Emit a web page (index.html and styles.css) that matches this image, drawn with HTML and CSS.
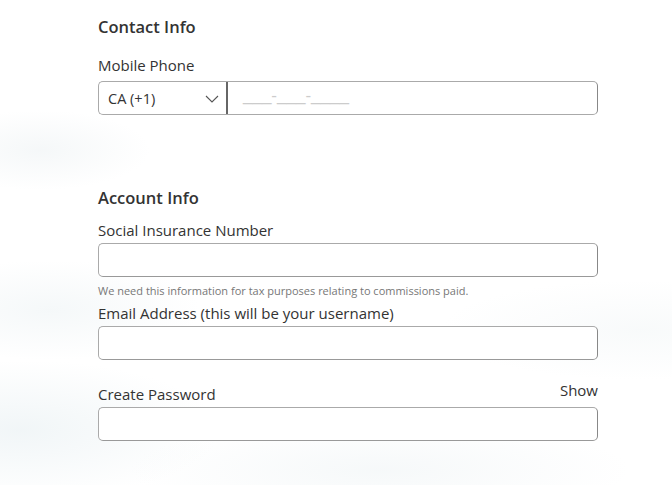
FILE: index.html
```html
<!DOCTYPE html>
<html lang="en">
<head>
    <meta charset="UTF-8">
    <title>Sign Up</title>
    <link rel="stylesheet" href="styles.css">
</head>
<body>
    <div class="form-wrap">
        <section class="section contact">
            <h3>Contact Info</h3>
            <label class="field-label">Mobile Phone</label>
            <div class="phone-row">
                <div class="country">
                    <span>CA (+1)</span>
                    <svg class="chevron" width="14" height="8" viewBox="0 0 14 8"><path d="M1 1 L7 7 L13 1" fill="none" stroke="#555" stroke-width="1.1"/></svg>
                </div>
                <div class="phone-input"><span class="mask">___-___-____</span></div>
            </div>
        </section>

        <section class="section account">
            <h3>Account Info</h3>
            <label class="field-label">Social Insurance Number</label>
            <div class="text-input"></div>
            <p class="hint">We need this information for tax purposes relating to commissions paid.</p>

            <label class="field-label">Email Address (this will be your username)</label>
            <div class="text-input"></div>

            <div class="label-row">
                <label class="field-label">Create Password</label>
                <span class="show">Show</span>
            </div>
            <div class="text-input"></div>
        </section>
    </div>
</body>
</html>
```

FILE: styles.css
```css
body {
    margin: 0;
    height: 485px;
    overflow: hidden;
    font-family: 'Open Sans', 'Liberation Sans', sans-serif;
    color: #333;
    background:
        radial-gradient(ellipse 110px 40px at 40px 150px, rgba(215, 226, 230, 0.25), transparent),
        radial-gradient(ellipse 150px 50px at 50px 310px, rgba(215, 228, 232, 0.25), transparent),
        radial-gradient(ellipse 200px 70px at 20px 430px, rgba(220, 232, 236, 0.4), transparent),
        radial-gradient(ellipse 250px 50px at 380px 470px, rgba(225, 234, 237, 0.3), transparent),
        radial-gradient(ellipse 200px 50px at 640px 330px, rgba(228, 236, 238, 0.25), transparent),
        #fff;
}

.form-wrap {
    width: 500px;
    margin-left: 98px;
}

h3 {
    font-size: 16.5px;
    line-height: 20px;
    font-weight: 600;
    margin: 0;
    color: #333;
}

.contact {
    padding-top: 17px;
}

.contact h3 {
    margin-bottom: 19px;
}

.account {
    padding-top: 73px;
}

.account h3 {
    margin-bottom: 13px;
}

.field-label {
    display: block;
    font-size: 15px;
    line-height: 18px;
    margin-bottom: 4px;
}

.contact .field-label {
    margin-bottom: 7px;
}

.phone-row {
    display: flex;
    height: 34px;
    box-sizing: border-box;
    border: 1px solid #aaa;
    border-right-color: #888;
    border-radius: 5px;
}

.country {
    width: 129px;
    display: flex;
    align-items: center;
    justify-content: space-between;
    padding: 0 7px 0 9px;
    box-sizing: border-box;
    border-right: 2px solid #666;
    font-size: 14.5px;
}

.chevron {
    margin-top: 1px;
}

.phone-input {
    flex: 1;
    display: flex;
    align-items: center;
    padding-left: 15px;
}

.mask {
    font-family: 'Liberation Sans', sans-serif;
    font-size: 17px;
    color: #ccc;
    position: relative;
    top: -2px;
}

.text-input {
    height: 34px;
    box-sizing: border-box;
    border: 1px solid #aaa;
    border-right-color: #888;
    border-bottom-color: #999;
    border-radius: 5px;
    background: #fff;
}

.hint {
    font-size: 11px;
    line-height: 14px;
    color: #777;
    margin: 7px 0 6px;
}

.label-row {
    display: flex;
    justify-content: space-between;
    align-items: flex-end;
    margin-top: 25px;
    margin-bottom: 4px;
}

.label-row .field-label {
    margin-bottom: 0;
}

.show {
    font-size: 15px;
    line-height: 18px;
    position: relative;
    top: -4px;
}
```
